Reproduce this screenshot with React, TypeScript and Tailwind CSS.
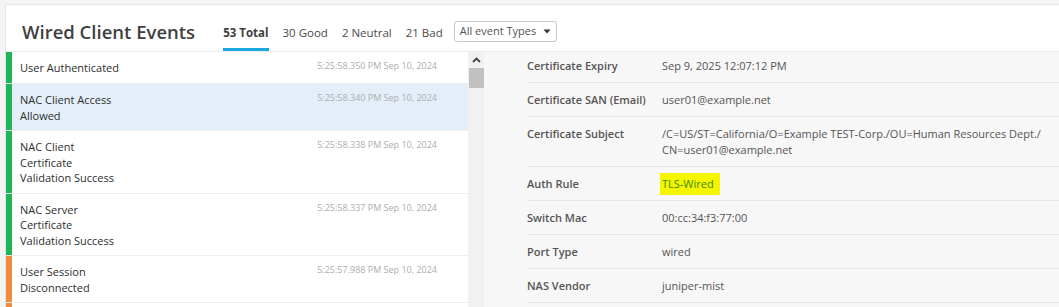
import React from 'react';

type Ev = { lines: string[]; time: string; tone: 'good' | 'bad'; active?: boolean };

const events: Ev[] = [
  { lines: ['User Authenticated'], time: '5:25:58.350 PM Sep 10, 2024', tone: 'good' },
  { lines: ['NAC Client Access', 'Allowed'], time: '5:25:58.340 PM Sep 10, 2024', tone: 'good', active: true },
  { lines: ['NAC Client', 'Certificate', 'Validation Success'], time: '5:25:58.338 PM Sep 10, 2024', tone: 'good' },
  { lines: ['NAC Server', 'Certificate', 'Validation Success'], time: '5:25:58.337 PM Sep 10, 2024', tone: 'good' },
  { lines: ['User Session', 'Disconnected'], time: '5:25:57.988 PM Sep 10, 2024', tone: 'bad' },
  { lines: [], time: '', tone: 'bad' },
];

const details: { label: string; value: React.ReactNode }[] = [
  { label: 'Certificate Expiry', value: 'Sep 9, 2025 12:07:12 PM' },
  { label: 'Certificate SAN (Email)', value: 'user01@example.net' },
  {
    label: 'Certificate Subject',
    value: (
      <>
        <span className="block">/C=US/ST=California/O=Example TEST-Corp./OU=Human Resources Dept./</span>
        <span className="block">CN=user01@example.net</span>
      </>
    ),
  },
  {
    label: 'Auth Rule',
    value: (
      <span className="-my-[3px] -ml-[2px] inline-block bg-[#f5f500] py-[3px] pl-[2px] pr-[6px] text-[#3d8a00]">
        TLS-Wired
      </span>
    ),
  },
  { label: 'Switch Mac', value: '00:cc:34:f3:77:00' },
  { label: 'Port Type', value: 'wired' },
  { label: 'NAS Vendor', value: 'juniper-mist' },
];

const tabs = [
  { label: '53 Total', active: true },
  { label: '30 Good' },
  { label: '2 Neutral' },
  { label: '21 Bad' },
];

export default function App() {
  return (
    <div
      className="h-[307px] w-[1059px] overflow-hidden bg-[#f4f4f4] pl-[5px] pt-[4px]"
      style={{ fontFamily: '"Open Sans", "Noto Sans", sans-serif' }}
    >
      <div className="flex h-full flex-col border-l border-t border-[#e3e3e3] bg-white">
        {/* header */}
        <div className="flex h-[47px] shrink-0 items-end border-b border-[#ebebeb] pl-[16px]">
          <h1 className="mb-[5px] text-[18.5px] font-semibold leading-[28px] text-[#3f3f3f]">Wired Client Events</h1>
          <div className="ml-[28px] flex items-end gap-[14px]">
            {tabs.map((t) => (
              <div
                key={t.label}
                className={
                  t.active
                    ? 'border-b-[3px] border-[#1aa7e0] pb-[6px] text-[11.5px] font-bold leading-[18px] text-[#3f3f3f]'
                    : 'border-b-[3px] border-transparent pb-[6px] text-[11.5px] leading-[18px] text-[#4a4a4a]'
                }
              >
                {t.label}
              </div>
            ))}
          </div>
          <div className="mb-[9px] ml-[11px] flex h-[21px] w-[103px] items-center justify-between rounded-[3px] border border-[#c9c9c9] pl-[5px] pr-[5px] text-[11px] text-[#555]">
            <span>All event Types</span>
            <svg width="8" height="5" viewBox="0 0 8 5">
              <path d="M0.5 0.5 L7.5 0.5 L4 4.5 Z" fill="#333" />
            </svg>
          </div>
        </div>

        {/* body */}
        <div className="flex min-h-0 flex-1">
          <div className="w-[462px] shrink-0">
            {events.map((e, i) => (
              <div
                key={i}
                className={`flex border-b border-[#efefef] ${e.active ? 'bg-[#e4eef8]' : 'bg-white'}`}
              >
                <div className={`w-[6px] shrink-0 ${e.tone === 'good' ? 'bg-[#1eb45a]' : 'bg-[#ef8a3e]'}`} />
                <div className="flex min-h-[31px] flex-1 justify-between pb-[7px] pl-[8px] pr-[31px] pt-[8px]">
                  <div className="w-[104px] text-[11px] font-medium leading-[15.5px] text-[#2e2e2e]">
                    {e.lines.map((l) => (
                      <div key={l}>{l}</div>
                    ))}
                  </div>
                  <div className="text-[9px] leading-3 text-[#adadad]">{e.time}</div>
                </div>
              </div>
            ))}
          </div>

          {/* scrollbar */}
          <div className="flex w-[16px] shrink-0 flex-col items-center bg-[#f1f1f1]">
            <svg className="mt-[5px]" width="9" height="6" viewBox="0 0 9 6">
              <path d="M1 5 L4.5 1.5 L8 5" fill="none" stroke="#444" strokeWidth="1.8" />
            </svg>
            <div className="mt-[5px] h-[20px] w-[15px] self-end bg-[#c1c1c1]" />
          </div>

          {/* details */}
          <div className="flex-1 bg-[#f7f7f7] pl-[43px]">
            {details.map((d, i) => (
              <div
                key={d.label}
                className={`flex border-b border-[#e6e6e6] pb-[8px] text-[11px] leading-4 text-[#555] ${i === 0 ? 'pt-[6px]' : 'pt-[9px]'}`}
              >
                <div className="w-[135px] shrink-0 font-semibold">{d.label}</div>
                <div>{d.value}</div>
              </div>
            ))}
          </div>
        </div>
      </div>
    </div>
  );
}
